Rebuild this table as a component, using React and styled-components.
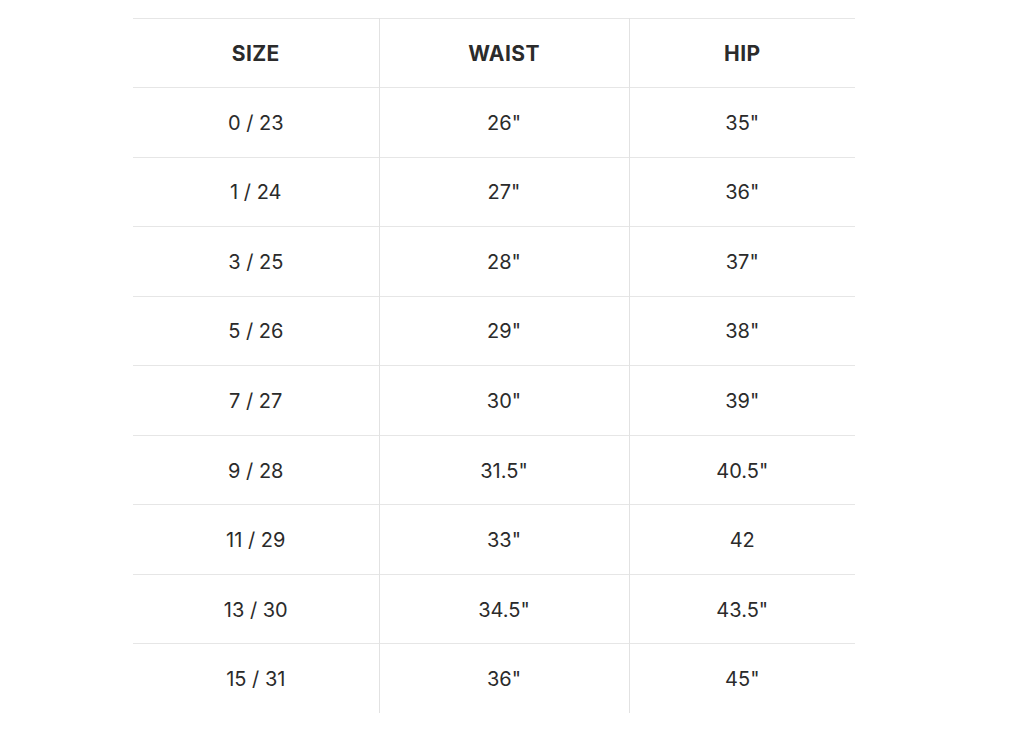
import React from "react";
import styled, { createGlobalStyle } from "styled-components";

const Global = createGlobalStyle`
  html, body { margin: 0; padding: 0; background: #ffffff; }
  body { font-family: Inter, "Open Sans", "Liberation Sans", sans-serif; color: #2b2b2b; }
`;

const Page = styled.main`
  padding: 18px 0 0 133px;
`;

const Table = styled.table`
  border-collapse: collapse;
  table-layout: fixed;
  width: 722px;
`;

const Col = styled.col`
  width: ${(p) => p.$w}px;
`;

const Row = styled.tr`
  border-top: 1px solid #e6e6e6;
`;

const HeadCell = styled.th`
  height: 68px;
  padding: 0;
  font-size: 21px;
  font-weight: 700;
  letter-spacing: 0.4px;
  text-align: center;
  vertical-align: middle;
  color: #2b2b2b;
  & + & { border-left: 1px solid #e2e2e2; }
`;

const Cell = styled.td`
  height: 67.56px;
  padding: 1px 0 0;
  font-size: 20px;
  font-weight: 400;
  text-align: center;
  vertical-align: middle;
  color: #2b2b2b;
  & + & { border-left: 1px solid #e2e2e2; }
`;

const rows = [
  ["0 / 23", "26\"", "35\""],
  ["1 / 24", "27\"", "36\""],
  ["3 / 25", "28\"", "37\""],
  ["5 / 26", "29\"", "38\""],
  ["7 / 27", "30\"", "39\""],
  ["9 / 28", "31.5\"", "40.5\""],
  ["11 / 29", "33\"", "42"],
  ["13 / 30", "34.5\"", "43.5\""],
  ["15 / 31", "36\"", "45\""],
];

export default function App() {
  return (
    <>
      <Global />
      <Page>
        <Table>
          <colgroup>
            <Col $w={246} />
            <Col $w={250} />
            <Col $w={226} />
          </colgroup>
          <thead>
            <Row>
              <HeadCell>SIZE</HeadCell>
              <HeadCell>WAIST</HeadCell>
              <HeadCell>HIP</HeadCell>
            </Row>
          </thead>
          <tbody>
            {rows.map((r) => (
              <Row key={r[0]}>
                {r.map((c, i) => (
                  <Cell key={i}>{c}</Cell>
                ))}
              </Row>
            ))}
          </tbody>
        </Table>
      </Page>
    </>
  );
}
